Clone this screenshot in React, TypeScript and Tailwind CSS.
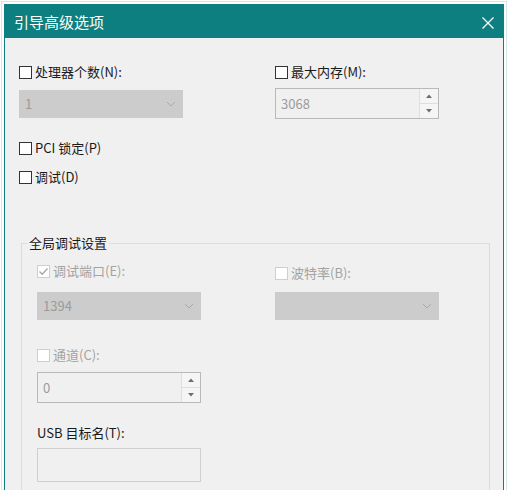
import clsx from 'clsx'

const font = { fontFamily: '"Noto Sans CJK SC", "Noto Sans", sans-serif' }

/** Win10-style square checkbox */
function CheckBox({ checked = false, disabled = false }: { checked?: boolean; disabled?: boolean }) {
  return (
    <span
      className={clsx(
        'flex h-[13px] w-[13px] shrink-0 items-center justify-center border bg-white',
        disabled ? 'border-[#cfcfcf]' : 'border-[#333333]'
      )}
    >
      {checked && (
        <svg width="11" height="11" viewBox="0 0 11 11">
          <path d="M1.5 5.5 L4.2 8.2 L9.5 2.5" fill="none" stroke="#a6a6a6" strokeWidth="1.3" />
        </svg>
      )}
    </span>
  )
}

function CheckRow({ label, checked, disabled }: { label: string; checked?: boolean; disabled?: boolean }) {
  return (
    <label className={clsx('flex h-[18px] items-center gap-[3px]', disabled ? 'text-[#a3a3a3]' : 'text-[#1a1a1a]')}>
      <CheckBox checked={checked} disabled={disabled} />
      <span>{label}</span>
    </label>
  )
}

/** Disabled combo box */
function Select({ value }: { value?: string }) {
  return (
    <div className="flex h-[28px] w-[164px] items-center justify-between bg-[#cccccc] pl-[6px] pr-[7px] text-[#9b9b9b]">
      <span>{value}</span>
      <svg width="10" height="6" viewBox="0 0 10 6">
        <path d="M1 1 L5 5 L9 1" fill="none" stroke="#a9a9a9" strokeWidth="1" />
      </svg>
    </div>
  )
}

/** Disabled numeric up-down */
function Spinner({ value }: { value: string }) {
  return (
    <div className="flex h-[31px] w-[164px] border border-[#b9b9b9] bg-[#f0f0f0]">
      <div className="flex flex-1 items-center pl-[5px] text-[#9b9b9b]">{value}</div>
      <div className="flex w-[19px] flex-col border-l border-[#dedede] bg-[#f5f5f5]">
        <div className="flex flex-1 items-center justify-center border-b border-[#dedede]">
          <svg width="6" height="4" viewBox="0 0 6 4">
            <path d="M0 4 L3 0.5 L6 4 Z" fill="#6e6e6e" />
          </svg>
        </div>
        <div className="flex flex-1 items-center justify-center">
          <svg width="6" height="4" viewBox="0 0 6 4">
            <path d="M0 0 L3 3.5 L6 0 Z" fill="#6e6e6e" />
          </svg>
        </div>
      </div>
    </div>
  )
}

export default function App() {
  return (
    <div className="h-[490px] w-[508px] overflow-hidden bg-white p-[1px] text-[13px]" style={font}>
      <div className="h-[500px] border border-[#d3e7e8] bg-white p-[2px]">
        <div className="flex h-full flex-col border border-[#0e7f80] bg-[#f0f0f0]">
          {/* Title bar */}
          <div className="flex h-[33px] shrink-0 items-center justify-between bg-[#0e7f80] pl-[9px] pr-[9px] text-white">
            <span className="pt-[2px] text-[15px]">引导高级选项</span>
            <svg width="12" height="12" viewBox="0 0 12 12" className="mt-[2px]">
              <path d="M0.5 0.5 L11.5 11.5 M11.5 0.5 L0.5 11.5" stroke="#ffffff" strokeWidth="1.3" />
            </svg>
          </div>

          {/* Body */}
          <div className="flex flex-col pl-[14px] pt-[25px]">
            <div className="grid grid-cols-[256px_164px]">
              <div className="flex flex-col">
                <CheckRow label="处理器个数(N):" />
                <div className="mt-[9px]">
                  <Select value="1" />
                </div>
              </div>
              <div className="flex flex-col">
                <CheckRow label="最大内存(M):" />
                <div className="mt-[7px]">
                  <Spinner value="3068" />
                </div>
              </div>
            </div>

            <div className="mt-[20px]">
              <CheckRow label="PCI 锁定(P)" />
            </div>
            <div className="mt-[11px]">
              <CheckRow label="调试(D)" />
            </div>

            <fieldset className="ml-[2px] mt-[48px] h-[300px] w-[469px] border border-[#dcdcdc] pl-[5px]">
              <legend className="px-[2px] leading-[18px] text-[#1a1a1a]">全局调试设置</legend>
              <div className="flex flex-col pl-[10px] pt-[10px]">
                <div className="grid grid-cols-[238px_164px]">
                  <div className="flex flex-col">
                    <CheckRow label="调试端口(E):" checked disabled />
                    <div className="mt-[12px]">
                      <Select value="1394" />
                    </div>
                  </div>
                  <div className="flex flex-col">
                    <div className="mt-[2px]">
                      <CheckRow label="波特率(B):" disabled />
                    </div>
                    <div className="mt-[10px]">
                      <Select />
                    </div>
                  </div>
                </div>

                <div className="mt-[26px]">
                  <CheckRow label="通道(C):" disabled />
                </div>
                <div className="mt-[8px]">
                  <Spinner value="0" />
                </div>

                <div className="mt-[21px] flex h-[18px] items-center text-[#1a1a1a]">USB 目标名(T):</div>
                <div className="mt-[6px] h-[34px] w-[164px] border border-[#cfcfcf] bg-[#f0f0f0]" />
              </div>
            </fieldset>
          </div>
        </div>
      </div>
    </div>
  )
}
